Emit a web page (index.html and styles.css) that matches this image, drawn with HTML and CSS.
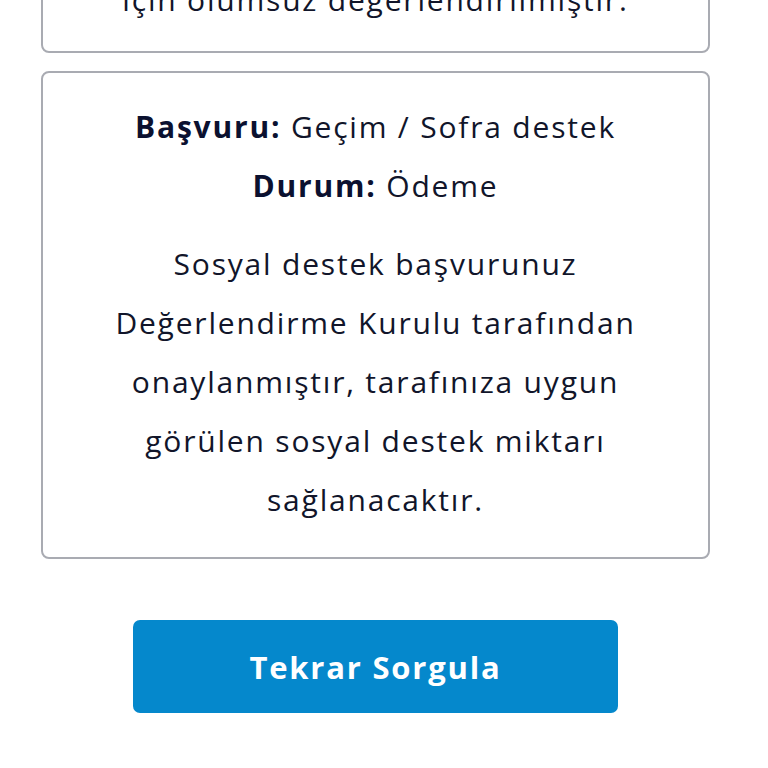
FILE: index.html
```html
<!DOCTYPE html>
<html lang="tr">
<head>
    <meta charset="UTF-8">
    <meta name="viewport" content="width=device-width, initial-scale=1.0">
    <title>Başvuru Sorgulama</title>
    <link rel="stylesheet" href="styles.css">
</head>
<body>
    <div class="page">
        <div class="card card-old">
            <p class="message">için olumsuz değerlendirilmiştir.</p>
        </div>

        <div class="card">
            <div class="row"><b>Başvuru:</b> Geçim / Sofra destek</div>
            <div class="row"><b>Durum:</b> Ödeme</div>
            <p class="message">Sosyal destek başvurunuz<br>
                Değerlendirme Kurulu tarafından<br>
                onaylanmıştır, tarafınıza uygun<br>
                görülen sosyal destek miktarı<br>
                sağlanacaktır.</p>
        </div>

        <div class="actions">
            <button class="btn">Tekrar Sorgula</button>
        </div>
    </div>
</body>
</html>
```

FILE: styles.css
```css
body {
    margin: 0;
    font-family: "Open Sans", "Noto Sans", sans-serif;
    background-color: #ffffff;
    color: #11152a;
}
.page {
    width: 669px;
    margin: -56px 0 0 41px;
}
.card {
    border: 2px solid #a9abb2;
    border-radius: 8px;
    padding: 24px 10px 28px;
    margin-bottom: 18px;
    text-align: center;
    font-size: 30px;
    letter-spacing: 1.8px;
    line-height: 59px;
}
.card-old {
    padding-bottom: 22px;
}
.row b {
    font-weight: 700;
    color: #0b1130;
}
.message {
    margin: 19px 0 0;
}
.card-old .message {
    margin: 0;
}
.actions {
    display: flex;
    justify-content: center;
    margin-top: 61px;
}
.btn {
    width: 485px;
    height: 93px;
    border: none;
    border-radius: 7px;
    background-color: #0588cc;
    color: #ffffff;
    font-family: "Open Sans", "Noto Sans", sans-serif;
    font-size: 31px;
    font-weight: 700;
    letter-spacing: 1.8px;
}
```
